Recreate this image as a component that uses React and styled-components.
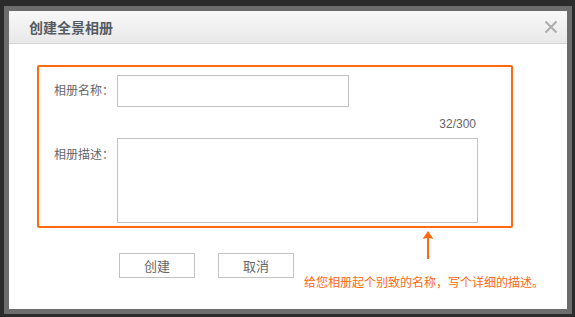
import styled, { createGlobalStyle } from "styled-components";

const orange = "#ff6a0e";
const cnFont = `"Liberation Sans", "Noto Sans CJK SC", sans-serif`;

const GlobalStyle = createGlobalStyle`
  html, body {
    margin: 0;
    padding: 0;
    background: #2b2b2b;
    font-family: ${cnFont};
  }
`;

const Page = styled.div`
  width: 575px;
  height: 317px;
  padding: 6px 3px 3px 4px;
  box-sizing: border-box;
  overflow: hidden;
`;

const Frame = styled.div`
  width: 568px;
  height: 308px;
  box-sizing: border-box;
  padding: 5px;
  background: #6c6c6c;
`;

const Dialog = styled.div`
  width: 100%;
  height: 100%;
  background: #fff;
  display: flex;
  flex-direction: column;
`;

const Header = styled.div`
  height: 32px;
  flex-shrink: 0;
  display: flex;
  align-items: center;
  justify-content: space-between;
  padding: 0 9px 0 20px;
  background: linear-gradient(#f8f8f8, #e8e8e8);
  border-bottom: 1px solid #d5d5d5;
`;

const Title = styled.h1`
  margin: 0;
  font-size: 14px;
  font-weight: bold;
  color: #555b62;
`;

const CloseButton = styled.button`
  border: 0;
  background: none;
  padding: 0;
  width: 14px;
  height: 14px;
  display: flex;
  cursor: pointer;
`;

const Body = styled.div`
  padding: 21px 0 0 28px;
`;

const FormBox = styled.div`
  width: 476px;
  height: 163px;
  box-sizing: border-box;
  border: 2px solid ${orange};
  border-radius: 2px;
  padding: 8px 0 0 15px;
  display: grid;
  grid-template-columns: 63px 361px;
  align-items: start;
`;

const Label = styled.label`
  font-size: 12px;
  line-height: 14px;
  color: #666;
  padding-top: ${(p) => p.$top}px;
`;

const TextInput = styled.input`
  display: block;
  width: 232px;
  height: 32px;
  box-sizing: border-box;
  border: 1px solid #c2c2c2;
  margin: 0;
  outline: none;
`;

const Counter = styled.div`
  grid-column: 2;
  text-align: right;
  padding-right: 2px;
  margin: 7px 0 4px;
  font-size: 12px;
  line-height: 14px;
  height: 14px;
  color: #666;
`;

const TextArea = styled.textarea`
  display: block;
  width: 361px;
  height: 85px;
  box-sizing: border-box;
  border: 1px solid #c2c2c2;
  margin: 0;
  resize: none;
  outline: none;
`;

const Footer = styled.div`
  display: flex;
  align-items: flex-start;
  padding-left: 82px;
`;

const Buttons = styled.div`
  display: flex;
  gap: 23px;
  margin-top: 25px;
`;

const Button = styled.button`
  width: 76px;
  height: 25px;
  box-sizing: border-box;
  border: 1px solid #c2c2c2;
  background: #fff;
  color: #666;
  font-family: ${cnFont};
  font-size: 13px;
  padding: 0;
`;

const Hint = styled.div`
  margin-left: 10px;
  margin-top: 3px;
  display: flex;
  flex-direction: column;
`;

const ArrowIcon = styled.svg`
  margin-left: 118px;
  display: block;
`;

const HintText = styled.div`
  margin-top: 17px;
  font-size: 12px;
  line-height: 14px;
  color: ${orange};
  white-space: nowrap;
`;

function App() {
  return (
    <Page>
      <GlobalStyle />
      <Frame>
        <Dialog>
          <Header>
            <Title>创建全景相册</Title>
            <CloseButton aria-label="关闭">
              <svg width="14" height="14" viewBox="0 0 14 14">
                <path d="M1.5 1.5 L12.5 12.5 M12.5 1.5 L1.5 12.5" stroke="#adadad" strokeWidth="2" />
              </svg>
            </CloseButton>
          </Header>
          <Body>
            <FormBox>
              <Label $top={9}>相册名称：</Label>
              <TextInput />
              <Counter>32/300</Counter>
              <Label $top={10}>相册描述：</Label>
              <TextArea />
            </FormBox>
            <Footer>
              <Buttons>
                <Button>创建</Button>
                <Button>取消</Button>
              </Buttons>
              <Hint>
                <ArrowIcon width="12" height="28" viewBox="0 0 12 28">
                  <path d="M6 0 L11.5 8 L7 7 L7 28 L5 28 L5 7 L0.5 8 Z" fill={orange} />
                </ArrowIcon>
                <HintText>给您相册起个别致的名称，写个详细的描述。</HintText>
              </Hint>
            </Footer>
          </Body>
        </Dialog>
      </Frame>
    </Page>
  );
}

export default App;
